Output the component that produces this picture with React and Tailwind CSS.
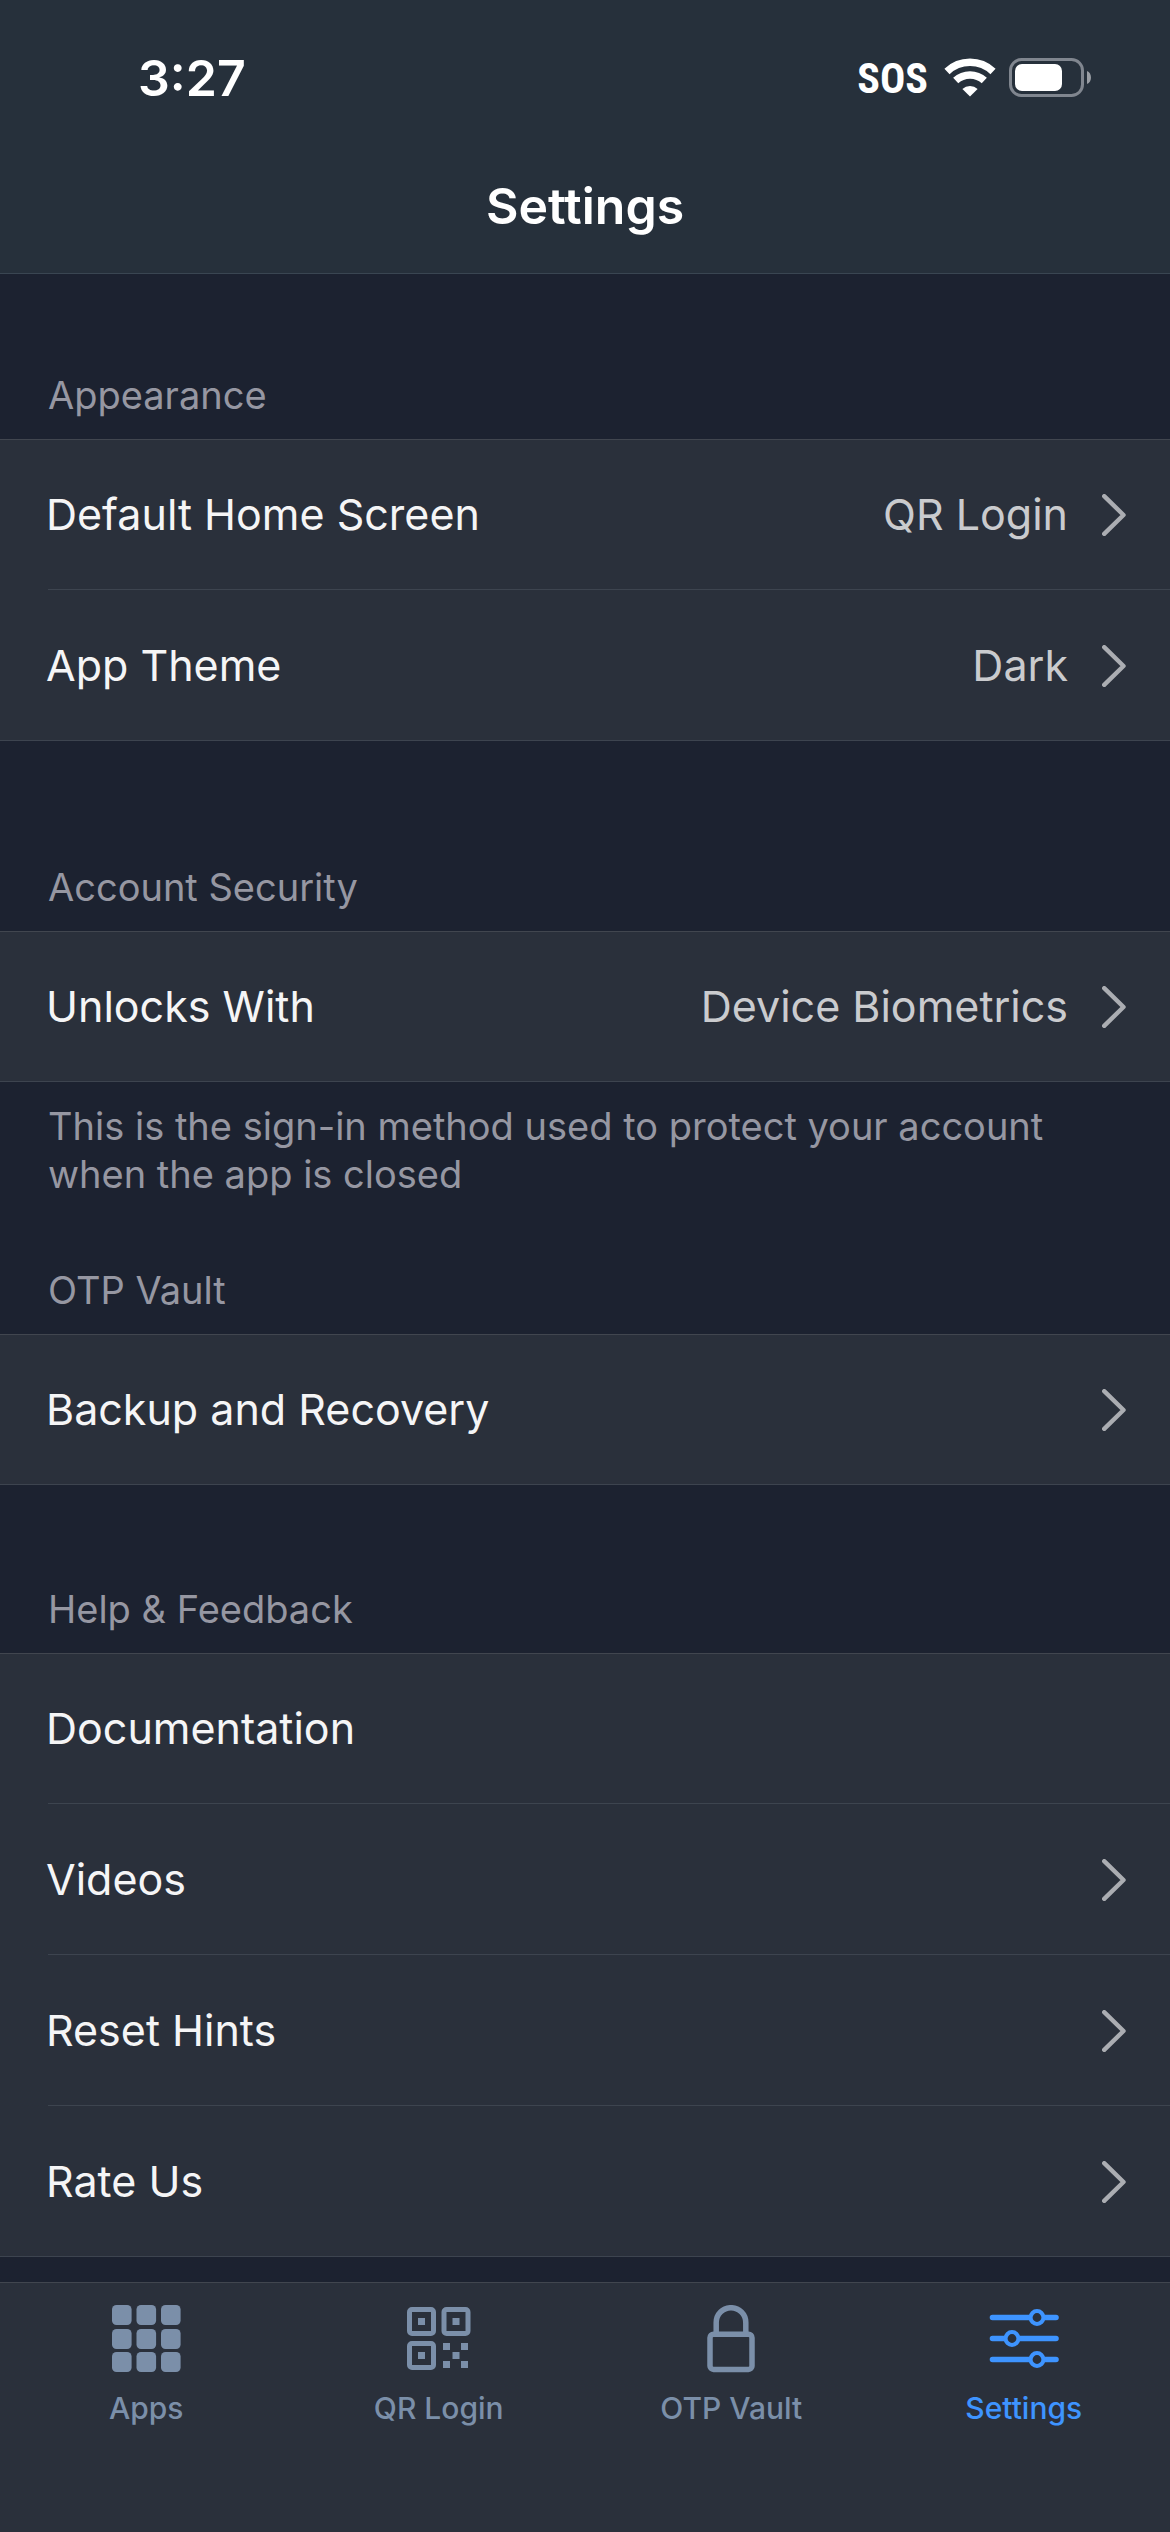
import { useState } from "react";

const sections = [
  {
    title: "Appearance",
    spacing: "pt-[97px]",
    rows: [
      { label: "Default Home Screen", value: "QR Login", chevron: true },
      { label: "App Theme", value: "Dark", chevron: true },
    ],
  },
  {
    title: "Account Security",
    spacing: "pt-[122px]",
    rows: [{ label: "Unlocks With", value: "Device Biometrics", chevron: true }],
    footer: "This is the sign-in method used to protect your account when the app is closed",
  },
  {
    title: "OTP Vault",
    spacing: "pt-[68px]",
    rows: [{ label: "Backup and Recovery", chevron: true }],
  },
  {
    title: "Help & Feedback",
    spacing: "pt-[100px]",
    rows: [
      { label: "Documentation" },
      { label: "Videos", chevron: true },
      { label: "Reset Hints", chevron: true },
      { label: "Rate Us", chevron: true },
    ],
  },
];

function WifiIcon() {
  return (
    <svg width="52" height="40" viewBox="0 0 52 40" fill="none" stroke="white" aria-hidden="true">
      <path d="M3 13.5a33.5 33.5 0 0 1 46 0" strokeWidth="7.5" />
      <path d="M11.7 22.6a21 21 0 0 1 28.6 0" strokeWidth="7.5" />
      <path d="M26 38.5l-7.6-7.6a11.2 11.2 0 0 1 15.2 0z" fill="white" stroke="none" />
    </svg>
  );
}

function BatteryIcon() {
  return (
    <svg width="84" height="40" viewBox="0 0 84 40" fill="none" aria-hidden="true">
      <rect x="2.5" y="1.5" width="72" height="36" rx="11" stroke="#80868f" strokeWidth="3" />
      <rect x="7" y="6" width="47" height="27" rx="7" fill="white" />
      <path d="M79 13c5.3 2 5.3 11 0 13z" fill="#9a9ea4" />
    </svg>
  );
}

function Chevron() {
  return (
    <svg width="24" height="42" viewBox="0 0 24 42" fill="none" aria-hidden="true">
      <path
        d="M2.2 2.2L21.5 21L2.2 39.8"
        stroke="#abadb2"
        strokeWidth="4.4"
        strokeLinecap="round"
        strokeLinejoin="round"
      />
    </svg>
  );
}

function AppsIcon() {
  return (
    <svg width="70" height="68" viewBox="0 0 70 68" fill="currentColor" aria-hidden="true">
      {[0, 24, 47].map((y) =>
        [1, 25.5, 50].map((x) => (
          <rect key={`${x}-${y}`} x={x} y={y} width="19.6" height="20" rx="4.5" />
        ))
      )}
    </svg>
  );
}

function QrIcon() {
  const dots = [
    [12, 13], [46.5, 13], [12, 47],
    [37, 38], [55, 38], [46.5, 47], [37, 56], [55, 56],
  ];
  return (
    <svg width="64" height="68" viewBox="1 0 64 68" fill="currentColor" aria-hidden="true">
      <g fill="none" stroke="currentColor" strokeWidth="5">
        <rect x="3.5" y="4.5" width="24" height="24" rx="2.5" />
        <rect x="38" y="4.5" width="24" height="24" rx="2.5" />
        <rect x="3.5" y="38.5" width="24" height="24" rx="2.5" />
      </g>
      {dots.map(([x, y]) => (
        <rect key={`${x}-${y}`} x={x} y={y} width="7" height="7" />
      ))}
    </svg>
  );
}

function LockIcon() {
  return (
    <svg width="48" height="68" viewBox="0 0 48 68" fill="none" stroke="currentColor" strokeWidth="5.5" aria-hidden="true">
      <rect x="3" y="29.2" width="42" height="35.2" rx="3.5" />
      <path d="M9.2 29V17.5a14.8 14.8 0 0 1 29.6 0V29" />
    </svg>
  );
}

function SlidersIcon() {
  return (
    <svg width="70" height="68" viewBox="0 0 70 68" fill="none" stroke="currentColor" aria-hidden="true">
      <path d="M3.5 12.5h37M55 12.5h12M3.5 33.5h13M30 33.5h37M3.5 54.5h37M55 54.5h12" strokeWidth="5.6" strokeLinecap="round" />
      <g strokeWidth="4" className="fill-[#2a303b]">
        <circle cx="48" cy="12.5" r="6.4" />
        <circle cx="23" cy="33.5" r="6.4" />
        <circle cx="48" cy="54.5" r="6.4" />
      </g>
    </svg>
  );
}

const tabs = [
  { name: "Apps", Icon: AppsIcon },
  { name: "QR Login", Icon: QrIcon },
  { name: "OTP Vault", Icon: LockIcon },
  { name: "Settings", Icon: SlidersIcon },
];

function Row({ label, value, chevron }) {
  return (
    // the divider is inset, except under the last row where it closes the group
    <li className="relative after:absolute after:left-12 after:right-0 after:bottom-0 after:h-px after:bg-[#3d444f] last:after:left-0">
      <button type="button" className="flex h-[151px] w-full items-center pl-[46px] pr-11 text-left text-[43px]">
        <span className="flex-1 text-[#f5f5f6]">{label}</span>
        {value && <span className="text-[#cacbce]">{value}</span>}
        {chevron && (
          <span className="pl-[34px]">
            <Chevron />
          </span>
        )}
      </button>
    </li>
  );
}

export default function App() {
  const [active, setActive] = useState("Settings");

  return (
    <div className="flex min-h-screen flex-col bg-[#1c2230] font-[Inter,sans-serif]">
      <header className="border-b border-[#3a4652] bg-[#26303b] text-white">
        <div className="flex h-[156px] items-center justify-between pl-[138px] pr-[78px]">
          <span className="text-[50px] font-semibold">3:27</span>
          <div className="flex items-center">
            <span className="pr-4 font-['Roboto_Condensed','Liberation_Sans_Narrow','Roboto',sans-serif] text-[42px] font-bold">
              SOS
            </span>
            <WifiIcon />
            <span className="pl-3">
              <BatteryIcon />
            </span>
          </div>
        </div>
        <h1 className="pb-4 text-center text-[50px] leading-[101px] font-semibold">Settings</h1>
      </header>

      <main className="flex-1">
        {sections.map((section) => (
          <section key={section.title} className={section.spacing}>
            <h2 className="px-12 pb-5 text-[38px] leading-[48px] text-[#9697a2]">{section.title}</h2>
            <ul className="bg-[#2a303b] shadow-[inset_0_1px_0_#41464f]">
              {section.rows.map((row) => (
                <Row key={row.label} {...row} />
              ))}
            </ul>
            {section.footer && (
              <p className="px-12 pt-5 text-[38px] leading-[48px] text-[#9697a2]">{section.footer}</p>
            )}
          </section>
        ))}
      </main>

      <nav className="sticky bottom-0 grid h-[250px] grid-cols-4 border-t border-[#41464f] bg-[#2a303b]">
        {tabs.map(({ name, Icon }) => (
          <button
            key={name}
            type="button"
            onClick={() => setActive(name)}
            className={`flex flex-col items-center gap-4 pt-[22px] text-[30px] leading-[38px] font-medium ${
              active === name ? "text-[#3e94ff]" : "text-[#7b8fa9]"
            }`}
          >
            <Icon />
            {name}
          </button>
        ))}
      </nav>
    </div>
  );
}
